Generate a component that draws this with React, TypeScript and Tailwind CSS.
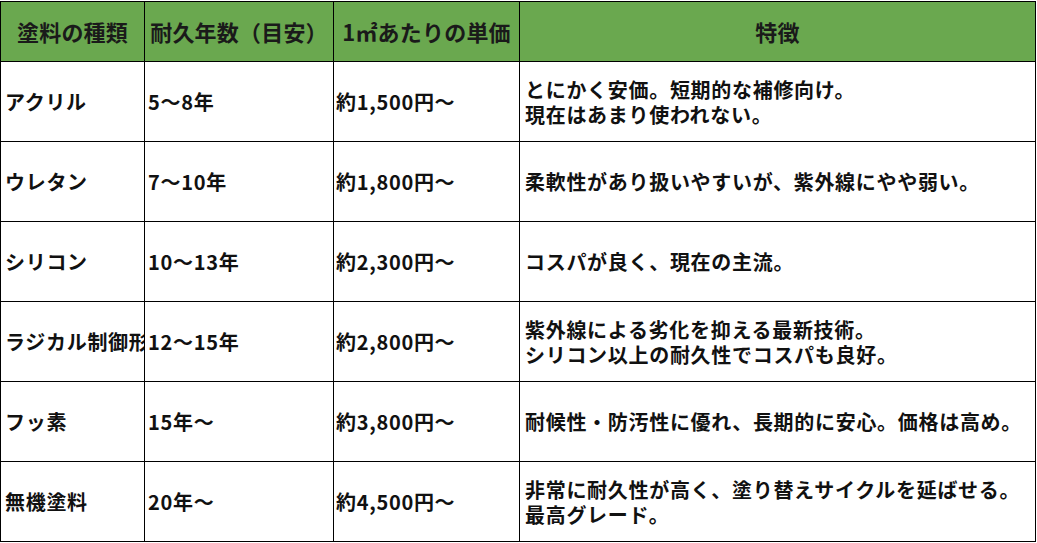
const headers = ["塗料の種類", "耐久年数（目安）", "1㎡あたりの単価", "特徴"];

const rows = [
  { name: "アクリル", years: "5～8年", price: "約1,500円～", note: ["とにかく安価。短期的な補修向け。", "現在はあまり使われない。"] },
  { name: "ウレタン", years: "7～10年", price: "約1,800円～", note: ["柔軟性があり扱いやすいが、紫外線にやや弱い。"] },
  { name: "シリコン", years: "10～13年", price: "約2,300円～", note: ["コスパが良く、現在の主流。"] },
  { name: "ラジカル制御形", years: "12～15年", price: "約2,800円～", note: ["紫外線による劣化を抑える最新技術。", "シリコン以上の耐久性でコスパも良好。"] },
  { name: "フッ素", years: "15年～", price: "約3,800円～", note: ["耐候性・防汚性に優れ、長期的に安心。価格は高め。"] },
  { name: "無機塗料", years: "20年～", price: "約4,500円～", note: ["非常に耐久性が高く、塗り替えサイクルを延ばせる。", "最高グレード。"] },
];

export default function App() {
  return (
    <div className="w-[1037px] h-[543px] bg-white pt-px font-['Noto_Sans_CJK_JP','Noto_Sans',sans-serif] font-bold text-[20px] tracking-[0.7px] text-[#111]">
      <div className="grid grid-cols-[144px_189px_186px_516px] w-[1036px] border-l border-t border-black">
        {headers.map((h) => (
          <div
            key={h}
            className="h-[60px] bg-[#6aa84f] border-r border-b border-black flex items-center justify-center whitespace-nowrap overflow-hidden text-[22px] tracking-[0.2px] text-[#1a1a1a]"
          >
            {h}
          </div>
        ))}
        {rows.map((r) => (
          <div key={r.name} className="contents">
            <div className="h-[80px] border-r border-b border-black flex items-center pl-1 whitespace-nowrap overflow-hidden">
              {r.name}
            </div>
            <div className="h-[80px] border-r border-b border-black flex items-center pl-[3px] whitespace-nowrap">
              {r.years}
            </div>
            <div className="h-[80px] border-r border-b border-black flex items-center pl-[2px] whitespace-nowrap">
              {r.price}
            </div>
            <div className="h-[80px] border-r border-b border-black flex items-center pl-[5px] whitespace-nowrap">
              <p className="leading-[25px]">
                {r.note[0]}
                {r.note[1] && (
                  <>
                    <br />
                    {r.note[1]}
                  </>
                )}
              </p>
            </div>
          </div>
        ))}
      </div>
    </div>
  );
}
